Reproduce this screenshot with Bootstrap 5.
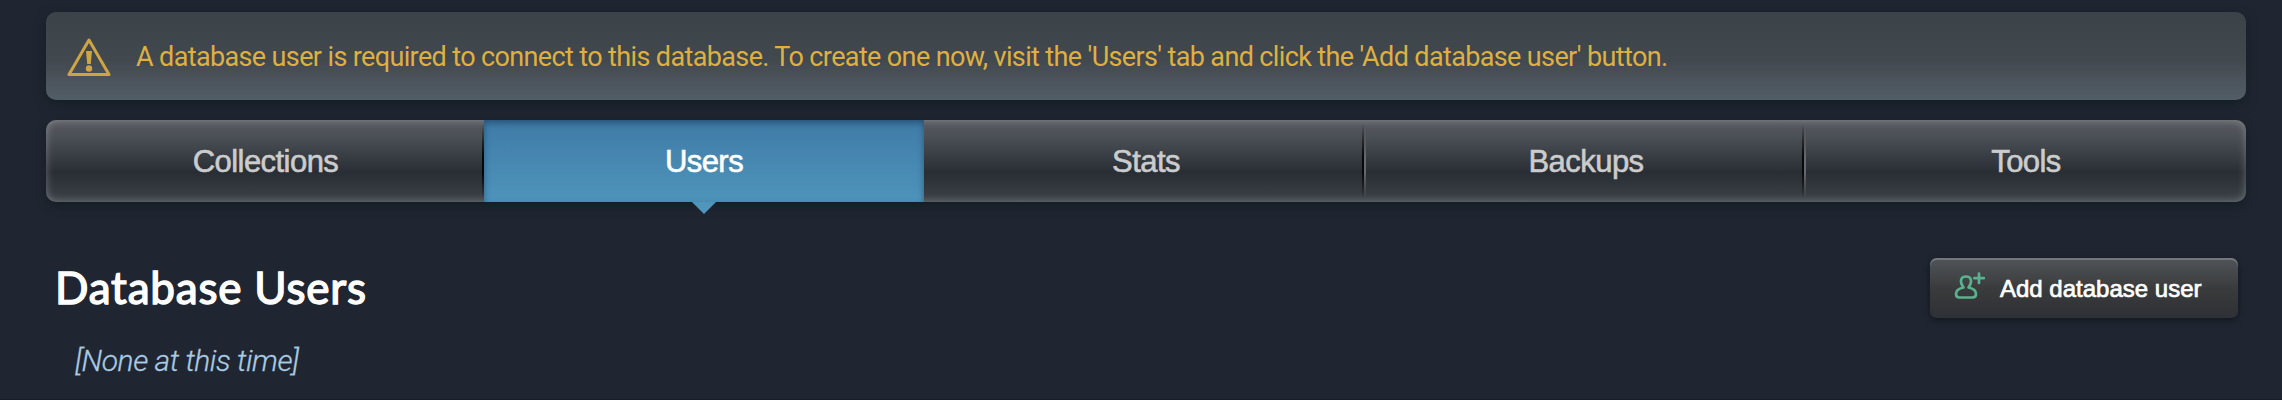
<!DOCTYPE html>
<html lang="en">
<head>
<meta charset="utf-8">
<meta name="viewport" content="width=device-width, initial-scale=1">
<title>Database Users</title>
<link href="https://cdn.jsdelivr.net/npm/bootstrap@5.3.0/dist/css/bootstrap.min.css" rel="stylesheet">
<style>
body{background:#202631;font-family:"Liberation Sans",Arial,sans-serif;overflow:hidden}
.page{height:400px;padding:12px 36px 0 46px;border-bottom:1px solid #1a1d2b}
.notice{height:88px;margin-bottom:20px;padding:2px 22px 0 21px;border:0;border-radius:10px;color:#deb041;background:linear-gradient(#3b4248 0,#41484e 55%,#4b525b 75%,#515d65 100%);box-shadow:0 4px 12px rgba(12,25,30,.65);font:400 27px/40px Roboto,sans-serif}
.notice-text{margin-left:25px;letter-spacing:-.63px;white-space:nowrap}
.tabs{height:82px;border-radius:10px;background:linear-gradient(#585b60 0,#4b4f56 20%,#292d34 64%,#3d4349 100%);box-shadow:0 4px 10px rgba(12,25,30,.65),inset 0 0 8px rgba(255,255,255,.3)}
.tabs .nav-link{position:relative;flex:0 0 440px;height:82px;padding:1px 0 0 4px;border-radius:0;line-height:82px;font-size:31px;color:#cbcccd;-webkit-text-stroke:.6px currentColor;letter-spacing:-.55px}
.tabs .nav-link:first-child{flex-basis:438px;padding-left:1px}
.tabs .nav-link:last-child{flex-basis:442px;padding-left:2px}
.tabs .nav-link.active{padding-left:0;color:#fff;background:linear-gradient(#3f7ba7,#4e94ba);box-shadow:inset 0 3px 6px rgba(20,50,75,.55)}
.tabs .nav-link.active::after{content:"";position:absolute;left:50%;top:100%;margin-left:-12px;border:12px solid transparent;border-top-color:#5095bb;border-bottom:0}
.divided::before{content:"";position:absolute;left:-2px;top:4px;width:4px;height:74px;background:linear-gradient(90deg,#070809 50%,#666a6e 50%);-webkit-mask:linear-gradient(transparent,#000 45%,#000 65%,transparent)}
.edge::before{content:"";position:absolute;right:0;top:4px;width:2px;height:74px;background:linear-gradient(transparent,#030405 45%,#030405 65%,transparent)}
.heading-row{padding:56px 8px 0 9px}
h1.title{font:400 44px/60px Lato,sans-serif;color:#fff;margin:-1px 0 1px;-webkit-text-stroke:1.4px #fff;letter-spacing:.8px}
.add-btn{width:308px;height:60px;padding:0 0 0 24px;border:0;border-radius:7px;color:#fff;font-size:24px;background:linear-gradient(#505459,#3a3b3c 50%,#2d3035);box-shadow:inset 0 2px 0 #74787b,0 2px 6px rgba(5,12,20,.6);-webkit-text-stroke:.7px #fff}
.add-btn:hover{color:#fff}
.add-icon{-webkit-text-stroke:0;margin-top:-4px}
.add-label{margin:1px 0 0 14px}
.empty-note{margin:23px 0 0 29px;font:italic 300 30px/40px Roboto,sans-serif;color:#a9cbe2;letter-spacing:-.45px;-webkit-text-stroke:.3px currentColor}
</style>
</head>
<body>
<main class="page">
  <div class="notice alert d-flex align-items-center" role="alert">
    <svg class="flex-shrink-0" width="44" height="40" viewBox="0 0 44 40" fill="none" stroke="#cfa544" stroke-width="3" stroke-linejoin="round"><path d="M22 3 2 37.500h40Z"/><path d="M19 14h6l-1.200 13h-3.600z" fill="#cfa544" stroke="none"/><circle cx="22" cy="31.500" r="3.200" fill="#cfa544" stroke="none"/></svg>
    <span class="notice-text">A database user is required to connect to this database. To create one now, visit the 'Users' tab and click the 'Add database user' button.</span>
  </div>
  <nav class="tabs nav text-center flex-nowrap">
    <a class="nav-link edge" href="#">Collections</a>
    <a class="nav-link active" href="#">Users</a>
    <a class="nav-link" href="#">Stats</a>
    <a class="nav-link divided" href="#">Backups</a>
    <a class="nav-link divided" href="#">Tools</a>
  </nav>
  <header class="heading-row d-flex justify-content-between">
    <h1 class="title">Database Users</h1>
    <button class="add-btn btn d-flex align-items-center" type="button">
      <svg class="add-icon flex-shrink-0" width="32" height="30" viewBox="0 0 32 30" fill="none" stroke="#59b28d" stroke-width="2.700" stroke-linecap="round" stroke-linejoin="round"><path d="M9.500 16.500C5.300 10.500 6.500 5.500 12 5.500s6.700 5 2.500 11c5 1 7.500 3 7.500 6.500 0 2.500-1 3.500-3.500 3.500h-13C3 26.500 2 25.500 2 23c0-3.500 2.500-5.500 7.500-6.500M25 2.500v9.500M20.300 7.200h9.500"/></svg>
      <span class="add-label">Add database user</span>
    </button>
  </header>
  <p class="empty-note">[None at this time]</p>
</main>
<script src="https://cdn.jsdelivr.net/npm/bootstrap@5.3.0/dist/js/bootstrap.bundle.min.js"></script>
</body>
</html>
